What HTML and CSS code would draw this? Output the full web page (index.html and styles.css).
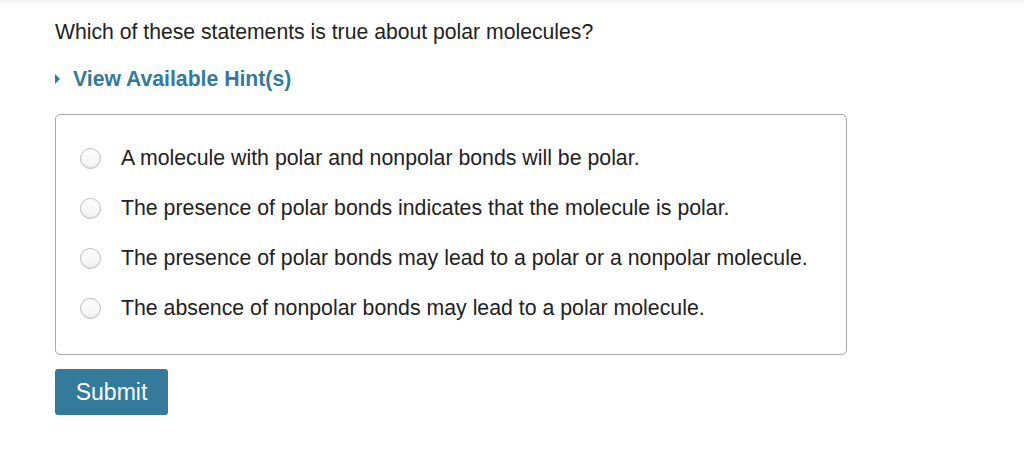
FILE: index.html
```html
<!DOCTYPE html>
<html lang="en">
<head>
    <meta charset="UTF-8">
    <title>Question</title>
    <link rel="stylesheet" href="styles.css">
</head>
<body>
    <div class="top-strip"></div>
    <div class="question">
        <p class="prompt">Which of these statements is true about polar molecules?</p>
        <a class="hint-toggle" href="#">
            <span class="arrow"></span>View Available Hint(s)
        </a>
        <div class="choices">
            <label class="choice"><span class="radio"></span>A molecule with polar and nonpolar bonds will be polar.</label>
            <label class="choice"><span class="radio"></span>The presence of polar bonds indicates that the molecule is polar.</label>
            <label class="choice"><span class="radio"></span>The presence of polar bonds may lead to a polar or a nonpolar molecule.</label>
            <label class="choice"><span class="radio"></span>The absence of nonpolar bonds may lead to a polar molecule.</label>
        </div>
        <button class="submit">Submit</button>
    </div>
</body>
</html>
```

FILE: styles.css
```css
body {
    margin: 0;
    background: #fff;
    font-family: 'Liberation Sans', Arial, sans-serif;
    color: #222;
}
.top-strip {
    height: 3px;
    background: #f4f4f4;
}
.question {
    padding: 0 0 0 55px;
}
.prompt {
    margin: 0;
    padding-top: 17px;
    font-size: 21.2px;
    line-height: 24px;
}
.hint-toggle {
    display: flex;
    align-items: center;
    margin-top: 23px;
    font-size: 21.2px;
    line-height: 24px;
    font-weight: bold;
    color: #337a9b;
    text-decoration: none;
}
.arrow {
    width: 0;
    height: 0;
    border-top: 5px solid transparent;
    border-bottom: 5px solid transparent;
    border-left: 5px solid #337a9b;
    margin-right: 13px;
}
.choices {
    width: 792px;
    height: 241px;
    margin-top: 23px;
    border: 1px solid #a9a9a9;
    border-radius: 5px;
    padding: 18px 0 0 24px;
    box-sizing: border-box;
}
.choice {
    display: flex;
    align-items: center;
    height: 50px;
    font-size: 21.3px;
    color: #222;
}
.radio {
    width: 21px;
    height: 21px;
    border-radius: 50%;
    border: 1px solid #bdbdbd;
    box-sizing: border-box;
    background: linear-gradient(to bottom, #fff, #f2f2f2);
    box-shadow: inset 0 -1px 1px rgba(0, 0, 0, 0.08);
    margin-right: 20px;
    flex-shrink: 0;
}
.submit {
    margin-top: 14px;
    width: 113px;
    height: 46px;
    background: #337a9b;
    color: #fff;
    border: none;
    border-radius: 3px;
    font-family: 'Liberation Sans', Arial, sans-serif;
    font-size: 23px;
    cursor: pointer;
}
```
